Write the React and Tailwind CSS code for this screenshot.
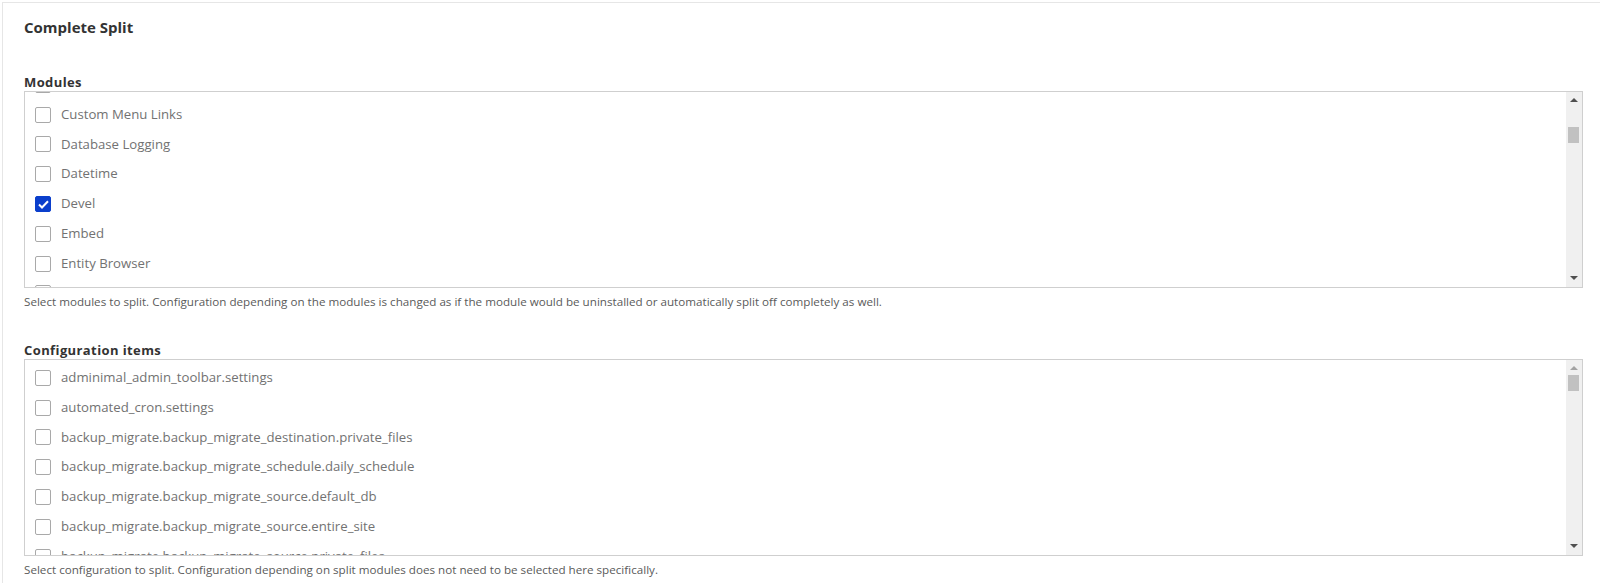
import React from "react";

const modules = [
  { name: "Components" },
  { name: "Custom Menu Links" },
  { name: "Database Logging" },
  { name: "Datetime" },
  { name: "Devel", checked: true },
  { name: "Embed" },
  { name: "Entity Browser" },
  { name: "Entity Embed" },
];

const configItems = [
  "adminimal_admin_toolbar.settings",
  "automated_cron.settings",
  "backup_migrate.backup_migrate_destination.private_files",
  "backup_migrate.backup_migrate_schedule.daily_schedule",
  "backup_migrate.backup_migrate_source.default_db",
  "backup_migrate.backup_migrate_source.entire_site",
  "backup_migrate.backup_migrate_source.private_files",
];

function Checkbox({ checked }) {
  if (checked) {
    return (
      <span className="w-[16px] h-[16px] rounded-[2px] bg-[#0b3fcc] border border-[#0b3fcc] flex items-center justify-center shrink-0">
        <svg width="11" height="9" viewBox="0 0 11 9">
          <path d="M1 4.5 L4 7.5 L10 1.2" fill="none" stroke="#fff" strokeWidth="2" />
        </svg>
      </span>
    );
  }
  return <span className="w-[16px] h-[16px] rounded-[2px] border border-[#a9a9a9] bg-white shrink-0" />;
}

function Scrollbar({ thumbTop, upDisabled }) {
  return (
    <div className="w-[16px] shrink-0 bg-[#f0f0f0] flex flex-col items-center relative">
      <div className="mt-[6px] w-0 h-0 border-l-[4px] border-r-[4px] border-b-[4px] border-l-transparent border-r-transparent"
        style={{ borderBottomColor: upDisabled ? "#a3a3a3" : "#505050" }} />
      <div className="absolute left-[2px] w-[11px] h-[16px] bg-[#c1c1c1]" style={{ top: thumbTop }} />
      <div className="mt-auto mb-[7px] w-0 h-0 border-l-[4px] border-r-[4px] border-t-[4px] border-l-transparent border-r-transparent border-t-[#505050]" />
    </div>
  );
}

function Row({ label, checked }) {
  return (
    <div className="h-[29.8px] flex items-center gap-[10px] pl-[10px] shrink-0">
      <Checkbox checked={checked} />
      <span className="text-[13.2px] text-[#727272] whitespace-nowrap">{label}</span>
    </div>
  );
}

export default function App() {
  return (
    <div className="w-[1600px] h-[583px] bg-white pt-[2px] pl-[2px] overflow-hidden" style={{ fontFamily: '"Open Sans", "Noto Sans", sans-serif' }}>
      <div className="border-t border-l border-[#e6e6e6] h-full pl-[21px] pt-[14px] pr-[17px]">
        <h2 className="text-[15px] font-bold text-[#333] leading-[20px]">Complete Split</h2>

        <div className="mt-[36px]">
          <div className="text-[13px] font-bold text-[#333] leading-[18px] tracking-[0.4px]">Modules</div>
          <div className="h-[197px] border border-[#cfcfcf] flex">
            <div className="flex-1 overflow-hidden">
              <div className="flex flex-col -mt-[22px]">
                {modules.map((m) => (
                  <Row key={m.name} label={m.name} checked={m.checked} />
                ))}
              </div>
            </div>
            <Scrollbar thumbTop={35} />
          </div>
          <p className="mt-[6px] text-[11.65px] leading-[16px] text-[#5a5a5a]">
            Select modules to split. Configuration depending on the modules is changed as if the module would be uninstalled or automatically split off completely as well.
          </p>
        </div>

        <div className="mt-[31px]">
          <div className="text-[13px] font-bold text-[#333] leading-[18px] tracking-[0.4px]">Configuration items</div>
          <div className="h-[197px] border border-[#cfcfcf] flex">
            <div className="flex-1 overflow-hidden">
              <div className="flex flex-col pt-[3px]">
                {configItems.map((c) => (
                  <Row key={c} label={c} />
                ))}
              </div>
            </div>
            <Scrollbar thumbTop={15} upDisabled />
          </div>
          <p className="mt-[6px] text-[11.65px] leading-[16px] text-[#5a5a5a]">
            Select configuration to split. Configuration depending on split modules does not need to be selected here specifically.
          </p>
        </div>
      </div>
    </div>
  );
}
